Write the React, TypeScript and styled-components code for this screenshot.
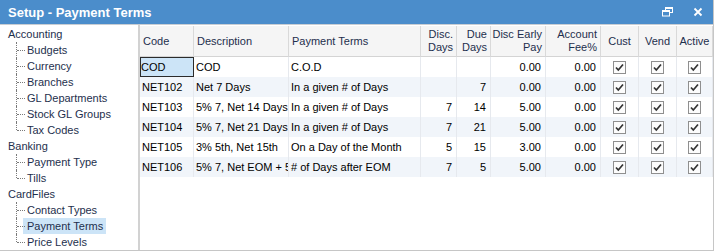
import React from "react";
import styled, { createGlobalStyle } from "styled-components";

const Global = createGlobalStyle`
  html, body { margin: 0; padding: 0; background: #ffffff; }
  body { font-family: "Liberation Sans", Arial, sans-serif; font-size: 11px; }
`;

const Window = styled.div`
  width: 714px;
  height: 251px;
  box-sizing: border-box;
  display: flex;
  flex-direction: column;
  border-right: 1px solid #c6c6c6;
  border-bottom: 1px solid #c6c6c6;
  overflow: hidden;
  background: #fff;
`;

const TitleBar = styled.div`
  height: 24px;
  flex: none;
  background: #4b8dcb;
  display: flex;
  align-items: center;
  padding: 0 0 0 8px;
  color: #fff;
  border-bottom: 1px solid #c8cdd3;
`;

const Title = styled.div`
  font-weight: bold;
  font-size: 13px;
  flex: 1;
`;

const TitleButton = styled.div`
  width: 30px;
  height: 24px;
  display: flex;
  align-items: center;
  justify-content: center;
`;

const Body = styled.div`
  flex: 1;
  display: flex;
  min-height: 0;
`;

const Tree = styled.div`
  width: 138px;
  flex: none;
  padding-top: 1px;
  border-right: 2px solid #d2d2d2;
  color: #1e2f4d;
`;

const TreeRow = styled.div<{ $child?: boolean }>`
  height: 16px;
  display: flex;
  align-items: center;
  position: relative;
  padding-left: ${(p) => (p.$child ? "23px" : "8px")};
  white-space: nowrap;
`;

const Connector = styled.span<{ $last?: boolean }>`
  position: absolute;
  left: 16px;
  top: 0;
  width: 9px;
  height: ${(p) => (p.$last ? "8px" : "16px")};
  border-left: 1px dotted #7a7a7a;
  &::after {
    content: "";
    position: absolute;
    left: 0;
    top: 8px;
    width: 8px;
    border-top: 1px dotted #7a7a7a;
  }
`;

const TreeLabel = styled.span<{ $selected?: boolean; $root?: boolean }>`
  display: inline-flex;
  align-items: center;
  height: 16px;
  padding: ${(p) => (p.$root ? "0" : "0 3px 0 4px")};
  background: ${(p) => (p.$selected ? "#cce4f7" : "transparent")};
`;

const GridArea = styled.div`
  flex: 1;
  min-width: 0;
  padding-top: 1px;
`;

const COLS = "54px 95px 132px 36px 34px 55px 55px 38px 38px 36px";

const HeaderRow = styled.div`
  display: grid;
  grid-template-columns: ${COLS};
  height: 31px;
  background: #f5f5f5;
  color: #1e2f4d;
`;

const HeaderCell = styled.div<{ $align: "left" | "right" | "center" }>`
  box-sizing: border-box;
  border-right: 1px solid #d9d9d9;
  border-bottom: 1px solid #d4d4d4;
  display: flex;
  flex-direction: column;
  justify-content: center;
  align-items: ${(p) =>
    p.$align === "left" ? "flex-start" : p.$align === "right" ? "flex-end" : "center"};
  text-align: ${(p) => p.$align};
  padding: 0 3px;
  line-height: 13px;
  white-space: nowrap;
  overflow: hidden;
`;

const Row = styled.div<{ $alt: boolean }>`
  display: grid;
  grid-template-columns: ${COLS};
  height: 20px;
  background: ${(p) => (p.$alt ? "#f1f5fa" : "#ffffff")};
  color: #000;
`;

const Cell = styled.div<{ $align: "left" | "right" | "center"; $selected?: boolean }>`
  box-sizing: border-box;
  border-right: 1px solid #e6e9ee;
  display: flex;
  align-items: center;
  justify-content: ${(p) =>
    p.$align === "left" ? "flex-start" : p.$align === "right" ? "flex-end" : "center"};
  padding: ${(p) => (p.$align === "right" ? "0 4px 0 2px" : p.$selected ? "0 2px 0 0" : "0 2px 0 2px")};
  white-space: nowrap;
  overflow: hidden;
  background: ${(p) => (p.$selected ? "#cce4f7" : "transparent")};
  border: ${(p) => (p.$selected ? "1px solid #2b2b2b" : undefined)};
`;

const CheckBox = styled.span`
  width: 13px;
  height: 13px;
  box-sizing: border-box;
  border: 1px solid #8f8f8f;
  background: #fcfcfc;
  display: inline-flex;
  align-items: center;
  justify-content: center;
`;

const Check = () => (
  <CheckBox>
    <svg width="11" height="11" viewBox="0 0 11 11">
      <path d="M2 5.5 L4.3 8 L9 2.5" fill="none" stroke="#333" strokeWidth="1.7" />
    </svg>
  </CheckBox>
);

type Align = "left" | "right" | "center";
const headers: { label: string[]; align: Align }[] = [
  { label: ["Code"], align: "left" },
  { label: ["Description"], align: "left" },
  { label: ["Payment Terms"], align: "left" },
  { label: ["Disc.", "Days"], align: "right" },
  { label: ["Due", "Days"], align: "right" },
  { label: ["Disc Early", "Pay"], align: "right" },
  { label: ["Account", "Fee%"], align: "right" },
  { label: ["Cust"], align: "center" },
  { label: ["Vend"], align: "center" },
  { label: ["Active"], align: "center" },
];

const rows = [
  ["COD", "COD", "C.O.D", "", "", "0.00", "0.00"],
  ["NET102", "Net 7 Days", "In a given # of Days", "", "7", "0.00", "0.00"],
  ["NET103", "5% 7, Net 14 Days", "In a given # of Days", "7", "14", "5.00", "0.00"],
  ["NET104", "5% 7, Net 21 Days", "In a given # of Days", "7", "21", "5.00", "0.00"],
  ["NET105", "3% 5th, Net 15th", "On a Day of the Month", "5", "15", "3.00", "0.00"],
  ["NET106", "5% 7, Net EOM + 5", "# of Days after EOM", "7", "5", "5.00", "0.00"],
];

const tree: { label: string; child?: boolean; last?: boolean; selected?: boolean }[] = [
  { label: "Accounting" },
  { label: "Budgets", child: true },
  { label: "Currency", child: true },
  { label: "Branches", child: true },
  { label: "GL Departments", child: true },
  { label: "Stock GL Groups", child: true },
  { label: "Tax Codes", child: true, last: true },
  { label: "Banking" },
  { label: "Payment Type", child: true },
  { label: "Tills", child: true, last: true },
  { label: "CardFiles" },
  { label: "Contact Types", child: true },
  { label: "Payment Terms", child: true, selected: true },
  { label: "Price Levels", child: true, last: true },
];

export default function App() {
  return (
    <>
      <Global />
      <Window>
        <TitleBar>
          <Title>Setup - Payment Terms</Title>
          <TitleButton>
            <svg width="12" height="10" viewBox="0 0 12 10">
              <rect x="3.5" y="0.5" width="7" height="5" fill="none" stroke="#fff" strokeWidth="1" />
              <rect x="3.5" y="0.5" width="7" height="1.5" fill="#fff" />
              <rect x="0.5" y="3.5" width="7" height="5.5" fill="#4b8dcb" stroke="#fff" strokeWidth="1" />
              <rect x="0.5" y="3.5" width="7" height="1.5" fill="#fff" />
            </svg>
          </TitleButton>
          <TitleButton>
            <svg width="10" height="10" viewBox="0 0 10 10">
              <path d="M1.5 1.5 L8.5 8.5 M8.5 1.5 L1.5 8.5" stroke="#fff" strokeWidth="1.8" />
            </svg>
          </TitleButton>
        </TitleBar>
        <Body>
          <Tree>
            {tree.map((t) => (
              <TreeRow key={t.label} $child={t.child}>
                {t.child && <Connector $last={t.last} />}
                <TreeLabel $selected={t.selected} $root={!t.child}>
                  {t.label}
                </TreeLabel>
              </TreeRow>
            ))}
          </Tree>
          <GridArea>
            <HeaderRow>
              {headers.map((h) => (
                <HeaderCell key={h.label.join(" ")} $align={h.align}>
                  {h.label.map((l) => (
                    <span key={l}>{l}</span>
                  ))}
                </HeaderCell>
              ))}
            </HeaderRow>
            {rows.map((r, i) => (
              <Row key={r[0]} $alt={i % 2 === 1}>
                {r.map((v, j) => (
                  <Cell key={j} $align={j < 3 ? "left" : "right"} $selected={i === 0 && j === 0}>
                    {v}
                  </Cell>
                ))}
                <Cell $align="center"><Check /></Cell>
                <Cell $align="center"><Check /></Cell>
                <Cell $align="center"><Check /></Cell>
              </Row>
            ))}
          </GridArea>
        </Body>
      </Window>
    </>
  );
}
